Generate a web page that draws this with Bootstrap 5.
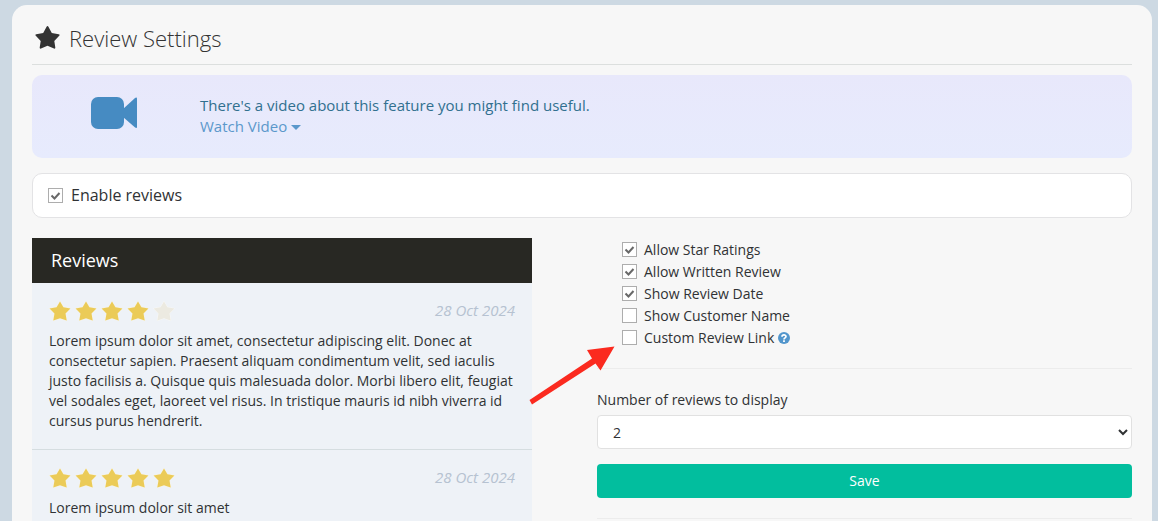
<!DOCTYPE html>
<html lang="en">
<head>
<meta charset="utf-8">
<meta name="viewport" content="width=device-width, initial-scale=1">
<title>Review Settings</title>
<link href="https://cdn.jsdelivr.net/npm/bootstrap@5.3.0/dist/css/bootstrap.min.css" rel="stylesheet">
<style>
  body { background: #cdd9e3; color: #303234; font: 14px/20px "Open Sans", "Noto Sans", sans-serif; }
  .panel { background: #f7f7f7; border-radius: 15px; margin: 5px 6px 0 12px; padding: 0 20px 20px; }
  .page-title { font-size: 22px; line-height: 30px; font-weight: 300; padding-top: 18px; padding-bottom: 11px; gap: 9px; border-bottom: 1px solid #dcdfde; color: #333; }
  .page-title svg { margin-left: 3px; }
  .video-note { background: linear-gradient(#e8e8fb, #e7ebfd); border-radius: 10px; padding: 20px 0 20px 59px; margin-top: 10px; min-height: 83px; gap: 61px; font-size: 15px; line-height: 21px; color: #31708f; }
  .video-note a { color: #5b98cb; }
  .caret { display: inline-block; border: 5px solid transparent; border-top-color: currentColor; border-bottom: 0; vertical-align: middle; }
  .enable-box { background: #fff; border: 1px solid #e3e3e5; border-radius: 10px; margin-top: 15px; padding: 10px 15px; font-size: 16px; line-height: 23px; }
  .columns { display: grid; grid-template-columns: 500fr 535fr; gap: 65px; margin-top: 20px; }
  .tick { appearance: none; flex: none; width: 15px; height: 15px; margin: 0; border: 1px solid #adadad; background: #fff; }
  .tick:checked { background: #fff url("data:image/svg+xml,%3Csvg xmlns='http://www.w3.org/2000/svg' viewBox='0 0 13 13'%3E%3Cpath d='M2.5 6.5l3 3 5-5.500' fill='none' stroke='%23686868' stroke-width='2'/%3E%3C/svg%3E") center/13px no-repeat; }
  .reviews { background: #eef2f7; }
  .reviews h2 { background: #282823; color: #fff; font-size: 18px; line-height: 25px; font-weight: 400; padding: 10px 19px; margin: 0; }
  .review { padding: 18px 17px; border-bottom: 1px solid #d5dde0; }
  .rating { gap: 4px; color: #ebcb58; }
  .rating svg { stroke: #f8f3df; stroke-width: 1; paint-order: stroke; }
  .rating .off { color: #eceae1; stroke: #f8f8f6; }
  .review-date { color: #b6c2d1; font-size: 15px; line-height: 18px; font-style: italic; }
  .review p { margin: 10px 0 0; }
  .options { padding-left: 25px; padding-top: 1px; line-height: 22px; }
  .opt { gap: 7px; }
  .opt .tick { margin-bottom: 2px; }
  .help { vertical-align: -1px; }
  .rule { border-top: 1px solid #ececec; }
  .options + .rule { margin: 19px 0 21px; }
  .count-label { margin-bottom: 5px; }
  .count-select { height: 34px; padding: 0 11px; border: 1px solid #e1e1e1; border-radius: 4px; background: #fff; color: #303234; }
  .save { height: 34px; background: #02be9e; color: #fff; font-size: 14px; line-height: 20px; border: 0; border-radius: 4px; padding: 7px; margin-top: 15px; margin-bottom: 20px; font-weight: 500; }
  .pointer { position: absolute; left: -94px; bottom: -58px; }
</style>
</head>
<body class="vh-100 overflow-hidden">
<svg class="d-none">
  <symbol id="star" viewBox="0 0 22 20"><path d="M11 .5l3.400 5.800 7 1.200-4.900 5 1.200 7L11 17.200l-6.700 2.300 1.200-7-4.900-5 7-1.200z"/></symbol>
</svg>
<main class="panel">
  <h1 class="page-title d-flex align-items-center m-0">
    <svg width="25" height="24" viewBox="0 0 25 24" fill="#333" aria-hidden="true"><path d="M12.500 0q.6 0 .9.700l3.400 6.300 6.900 1.200q.7.100.9.600t-.4 1l-4.900 5.100 1 6.700q.1.700-.3 1t-1 0L12.500 19.700l-6.500 2.900q-.6.300-1 0t-.3-1l1-6.700L.8 9.800q-.6-.5-.4-1t.9-.6L8.200 7l3.400-6.300q.3-.7.900-.7z"/></svg>
    Review Settings
  </h1>

  <section class="video-note d-flex align-items-start">
    <svg width="48" height="35" viewBox="0 0 48 35" fill="#468bc2" aria-hidden="true"><rect y="2" width="33" height="32" rx="7"/><path d="M32 14L43.500 3.500Q46 1.500 46 4V32q0 2-2.500 0L32 22z"/></svg>
    <div>There's a video about this feature you might find useful.<br>
      <a href="#" class="text-decoration-none">Watch Video <span class="caret"></span></a></div>
  </section>

  <div class="enable-box d-flex align-items-center gap-2">
    <input class="tick" type="checkbox" id="enable" checked>
    <label for="enable">Enable reviews</label>
  </div>

  <div class="columns">
    <section class="reviews">
      <h2>Reviews</h2>
      <article class="review">
        <div class="d-flex justify-content-between align-items-start">
          <div class="rating d-flex" role="img" aria-label="4 out of 5 stars">
            <svg width="22" height="20" fill="currentColor"><use href="#star"/></svg>
            <svg width="22" height="20" fill="currentColor"><use href="#star"/></svg>
            <svg width="22" height="20" fill="currentColor"><use href="#star"/></svg>
            <svg width="22" height="20" fill="currentColor"><use href="#star"/></svg>
            <svg class="off" width="22" height="20" fill="currentColor"><use href="#star"/></svg>
          </div>
          <time class="review-date">28 Oct 2024</time>
        </div>
        <p>Lorem ipsum dolor sit amet, consectetur adipiscing elit. Donec at consectetur sapien. Praesent aliquam condimentum velit, sed iaculis justo facilisis a. Quisque quis malesuada dolor. Morbi libero elit, feugiat vel sodales eget, laoreet vel risus. In tristique mauris id nibh viverra id cursus purus hendrerit.</p>
      </article>
      <article class="review">
        <div class="d-flex justify-content-between align-items-start">
          <div class="rating d-flex" role="img" aria-label="5 out of 5 stars">
            <svg width="22" height="20" fill="currentColor"><use href="#star"/></svg>
            <svg width="22" height="20" fill="currentColor"><use href="#star"/></svg>
            <svg width="22" height="20" fill="currentColor"><use href="#star"/></svg>
            <svg width="22" height="20" fill="currentColor"><use href="#star"/></svg>
            <svg width="22" height="20" fill="currentColor"><use href="#star"/></svg>
          </div>
          <time class="review-date">28 Oct 2024</time>
        </div>
        <p>Lorem ipsum dolor sit amet</p>
      </article>
    </section>

    <form>
      <div class="options position-relative">
        <div class="opt d-flex align-items-center"><input class="tick" type="checkbox" id="stars" checked><label for="stars">Allow Star Ratings</label></div>
        <div class="opt d-flex align-items-center"><input class="tick" type="checkbox" id="written" checked><label for="written">Allow Written Review</label></div>
        <div class="opt d-flex align-items-center"><input class="tick" type="checkbox" id="date" checked><label for="date">Show Review Date</label></div>
        <div class="opt d-flex align-items-center"><input class="tick" type="checkbox" id="name"><label for="name">Show Customer Name</label></div>
        <div class="opt d-flex align-items-center"><input class="tick" type="checkbox" id="link"><label for="link">Custom Review Link
          <svg class="help" width="12" height="12" viewBox="0 0 12 12" role="img" aria-label="Help"><circle cx="6" cy="6" r="6" fill="#5296cc"/><path d="M4 4.700C4 2.400 8 2.400 8 4.600 8 5.900 6 5.900 6 7.400" fill="none" stroke="#fff" stroke-width="1.700"/><path d="M5.100 8.300h1.800v1.600H5.100z" fill="#fff"/></svg></label></div>
        <svg class="pointer" width="140" height="66" viewBox="503 341 140 66" aria-hidden="true" pointer-events="none"><path d="M529.500 400L592 358.500 587 350l27.500-3.500L600.500 370.500 595.500 363.500 532 404.500z" fill="#fb2a1f"/></svg>
      </div>
      <div class="rule"></div>
      <label for="count" class="count-label d-block">Number of reviews to display</label>
      <select id="count" class="count-select d-block w-100"><option>1</option><option selected>2</option><option>3</option></select>
      <button type="button" class="save btn d-block w-100">Save</button>
      <div class="rule"></div>
    </form>
  </div>
</main>
<script src="https://cdn.jsdelivr.net/npm/bootstrap@5.3.0/dist/js/bootstrap.bundle.min.js"></script>
</body>
</html>
